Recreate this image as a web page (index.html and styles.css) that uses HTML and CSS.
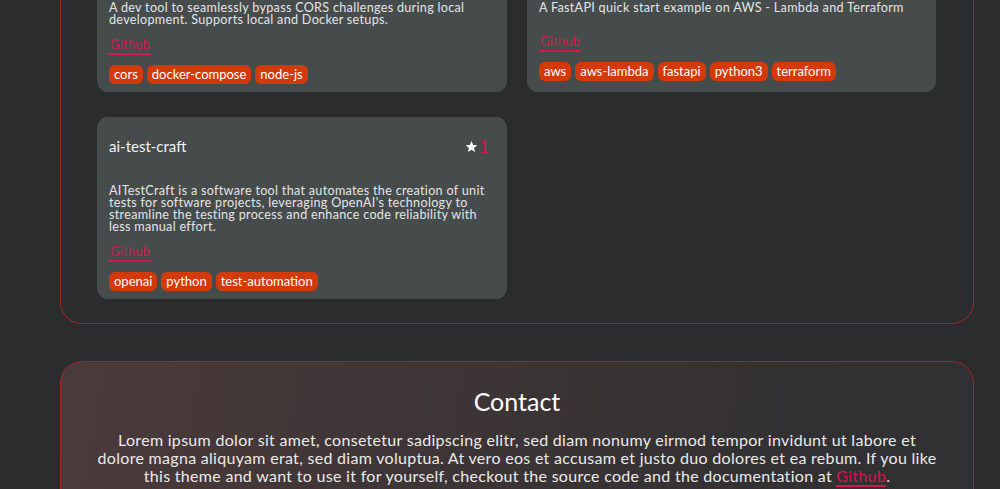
FILE: index.html
```html
<!DOCTYPE html>
<html lang="en">

<head>
    <meta charset="UTF-8">
    <title>Portfolio</title>
    <link rel="stylesheet" href="styles.css">
</head>

<body>
    <main class="page">
        <section class="panel projects">
            <div class="cardGrid">
                <article class="card">
                    <div class="cardHead">
                        <h3>cors-proxy</h3>
                        <span class="stars"><svg viewBox="0 0 24 24" width="13" height="13"><path d="M12 1.8l3 7.2 7.6.6-5.8 5 1.8 7.6L12 18.1l-6.6 4.1 1.8-7.6-5.8-5L9 9z" fill="#fff"/></svg>2</span>
                    </div>
                    <p class="desc">A dev tool to seamlessly bypass CORS challenges during local development. Supports local and Docker setups.</p>
                    <a class="repoLink" href="#">Github</a>
                    <div class="tags">
                        <span class="tag">cors</span>
                        <span class="tag">docker-compose</span>
                        <span class="tag">node-js</span>
                    </div>
                </article>
                <article class="card">
                    <div class="cardHead">
                        <h3>fastapi-aws-quickstart</h3>
                    </div>
                    <p class="desc">A FastAPI quick start example on AWS - Lambda and Terraform</p>
                    <a class="repoLink" href="#">Github</a>
                    <div class="tags tagsRaised">
                        <span class="tag">aws</span>
                        <span class="tag">aws-lambda</span>
                        <span class="tag">fastapi</span>
                        <span class="tag">python3</span>
                        <span class="tag">terraform</span>
                    </div>
                </article>
                <article class="card">
                    <div class="cardHead">
                        <h3>ai-test-craft</h3>
                        <span class="stars"><svg viewBox="0 0 24 24" width="13" height="13"><path d="M12 1.8l3 7.2 7.6.6-5.8 5 1.8 7.6L12 18.1l-6.6 4.1 1.8-7.6-5.8-5L9 9z" fill="#fff"/></svg>1</span>
                    </div>
                    <p class="desc">AITestCraft is a software tool that automates the creation of unit tests for software projects, leveraging OpenAI's technology to streamline the testing process and enhance code reliability with less manual effort.</p>
                    <a class="repoLink" href="#">Github</a>
                    <div class="tags">
                        <span class="tag">openai</span>
                        <span class="tag">python</span>
                        <span class="tag">test-automation</span>
                    </div>
                </article>
            </div>
        </section>

        <section class="panel contact">
            <h2>Contact</h2>
            <p>
                Lorem ipsum dolor sit amet, consetetur sadipscing elitr, sed diam nonumy eirmod tempor invidunt ut labore et
                dolore magna aliquyam erat, sed diam voluptua. At vero eos et accusam et justo duo dolores et ea rebum. If you like
                this theme and want to use it for yourself, checkout the source code and the documentation at <a href="#">Github</a>.
            </p>
        </section>
    </main>
</body>

</html>
```

FILE: styles.css
```css
body {
    margin: 0;
    background-color: #2b2c2e;
    color: #e8e8e8;
    font-family: Lato, "Open Sans", sans-serif;
    overflow: hidden;
}

.page {
    margin-top: -103px;
    margin-left: 60px;
    width: 914px;
}

.panel {
    border: 1px solid #a3262a;
    border-radius: 22px;
    box-sizing: border-box;
}

.projects {
    padding: 36px 37px 24px 36px;
}

.cardGrid {
    display: grid;
    grid-template-columns: 410px 409px;
    column-gap: 20px;
    row-gap: 25px;
}

.card {
    background-color: #464b4c;
    border-radius: 11px;
    padding: 20px 18px 8px 12px;
    display: flex;
    flex-direction: column;
}

.cardHead {
    display: flex;
    justify-content: space-between;
    align-items: center;
    height: 18px;
}

.cardHead h3 {
    margin: 0;
    font-size: 15px;
    font-weight: 400;
    color: #f2f2f2;
}

.stars {
    display: flex;
    align-items: center;
    gap: 1px;
    color: #d6174b;
    font-size: 17px;
}

.desc {
    flex: 1;
    margin: 30px 0 0 0;
    font-size: 12.6px;
    line-height: 12px;
    letter-spacing: 0.3px;
    color: #e4e4e4;
}

.repoLink {
    align-self: flex-start;
    margin-top: 11px;
    color: #d6174b;
    font-size: 13px;
    text-decoration: none;
    border-bottom: 2px solid #d6174b;
    padding: 0 1px 1px 1px;
    line-height: 15px;
    letter-spacing: 0.2px;
}

.tags {
    display: flex;
    flex-wrap: wrap;
    gap: 4px;
    margin-top: 10px;
}

.tagsRaised {
    margin-bottom: 3px;
}

.tag {
    background-color: #d3390b;
    color: #fff;
    font-size: 13px;
    line-height: 19px;
    padding: 0 5px;
    border-radius: 6px;
}

.contact {
    margin-top: 37px;
    padding: 20px 36px 30px 36px;
    text-align: center;
    background: linear-gradient(100deg, #4b3a3b 0%, #3e3536 40%, #313032 85%);
}

.contact h2 {
    margin: 0;
    font-size: 25px;
    font-weight: 400;
    color: #fff;
    line-height: 38px;
}

.contact p {
    margin: 11px 0 0 0;
    font-size: 16px;
    line-height: 18px;
    letter-spacing: 0.3px;
    color: #eaeaea;
}

.contact a {
    color: #d6174b;
    text-decoration: none;
    border-bottom: 2px solid #d6174b;
}
```
